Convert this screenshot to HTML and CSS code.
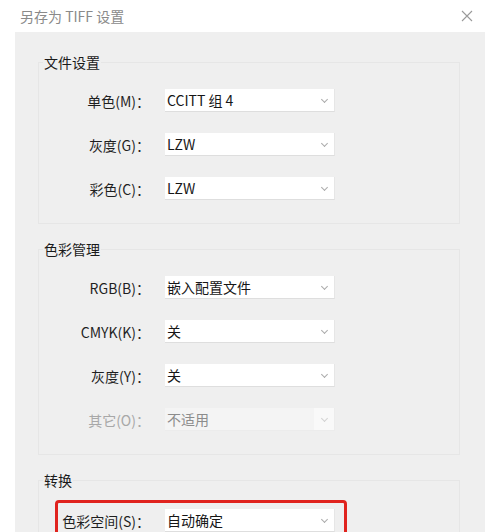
FILE: index.html
```html
<!DOCTYPE html>
<html lang="zh-CN">

<head>
    <meta charset="UTF-8">
    <meta name="viewport" content="width=device-width, initial-scale=1.0">
    <title>另存为 TIFF 设置</title>
    <link rel="stylesheet" href="styles.css">
</head>

<body>
    <div id="dialog">
        <header class="titlebar">
            <span class="title">另存为 TIFF 设置</span>
            <svg class="close" width="12" height="12" viewBox="0 0 12 12">
                <path d="M1 1L11 11M11 1L1 11" stroke="#9a9a9a" stroke-width="1.1" fill="none" />
            </svg>
        </header>
        <div class="panel">
            <fieldset class="group">
                <legend>文件设置</legend>
                <div class="row">
                    <label>单色(M)：</label>
                    <div class="select"><span>CCITT 组 4</span><i class="arrow"></i></div>
                </div>
                <div class="row">
                    <label>灰度(G)：</label>
                    <div class="select"><span>LZW</span><i class="arrow"></i></div>
                </div>
                <div class="row">
                    <label>彩色(C)：</label>
                    <div class="select"><span>LZW</span><i class="arrow"></i></div>
                </div>
            </fieldset>

            <fieldset class="group">
                <legend>色彩管理</legend>
                <div class="row">
                    <label>RGB(B)：</label>
                    <div class="select"><span>嵌入配置文件</span><i class="arrow"></i></div>
                </div>
                <div class="row">
                    <label>CMYK(K)：</label>
                    <div class="select"><span>关</span><i class="arrow"></i></div>
                </div>
                <div class="row">
                    <label>灰度(Y)：</label>
                    <div class="select"><span>关</span><i class="arrow"></i></div>
                </div>
                <div class="row disabled">
                    <label>其它(O)：</label>
                    <div class="select"><span>不适用</span><i class="arrow"></i></div>
                </div>
            </fieldset>

            <fieldset class="group last">
                <legend>转换</legend>
                <div class="highlight">
                    <div class="row">
                        <label>色彩空间(S)：</label>
                        <div class="select"><span>自动确定</span><i class="arrow"></i></div>
                    </div>
                </div>
            </fieldset>
        </div>
    </div>
</body>

</html>
```

FILE: styles.css
```css
html,
body {
    margin: 0;
    height: 100%;
    overflow: hidden;
    background: #fff;
}

body {
    font-family: "Noto Sans CJK SC", "Noto Sans", sans-serif;
    font-size: 14px;
    color: #222;
}

#dialog {
    width: 500px;
}

.titlebar {
    height: 32px;
    display: flex;
    align-items: center;
    justify-content: space-between;
    padding: 0 27px 0 20px;
}

.title {
    font-size: 14px;
    color: #8a8a8a;
    margin-top: -1px;
}

.close {
    display: block;
}

.panel {
    margin: 0 15px;
    background: #efefef;
    padding: 20px 25px 0 23px;
}

.group {
    margin: 0 0 15px;
    padding: 17px 0 23px;
    border: 1px solid #e6e6e6;
    min-width: 0;
}

.group.last {
    padding-top: 10px;
    height: 200px;
}

legend {
    margin-left: 4px;
    padding: 0 1px;
    line-height: 20px;
    font-size: 14px;
    color: #1a1a1a;
}

.row {
    display: flex;
    align-items: center;
    height: 23px;
    margin-bottom: 21px;
}

.row:last-child {
    margin-bottom: 0;
}

.row label {
    width: 111px;
    flex: none;
    white-space: nowrap;
    text-align: right;
    color: #1f1f1f;
}

.select {
    position: relative;
    margin-left: 15px;
    width: 170px;
    height: 23px;
    box-sizing: border-box;
    background: #fff;
    border-bottom: 1px solid #dedede;
    border-right: 1px solid #e6e6e6;
    display: flex;
    align-items: center;
    padding-left: 2px;
    color: #161616;
}

.arrow {
    position: absolute;
    right: 7px;
    top: 8px;
    width: 4px;
    height: 4px;
    border-right: 1px solid #ababab;
    border-bottom: 1px solid #ababab;
    transform: rotate(45deg);
}

.disabled label {
    color: #a8a8a8;
}

.disabled .select {
    background: #f4f4f4;
    border-color: #ececec;
    color: #8c8c8c;
}

.disabled .select::after {
    content: "";
    position: absolute;
    right: 0;
    top: 0;
    width: 20px;
    height: 100%;
    background: #f9f9f9;
}

.disabled .arrow {
    z-index: 1;
    border-color: #d2d2d2;
}

.highlight {
    margin-left: 16px;
    width: 286px;
    border: 3px solid #e0231e;
    border-radius: 4px;
    padding: 6px 0 20px;
}

.highlight .row label {
    width: 92px;
}
```
